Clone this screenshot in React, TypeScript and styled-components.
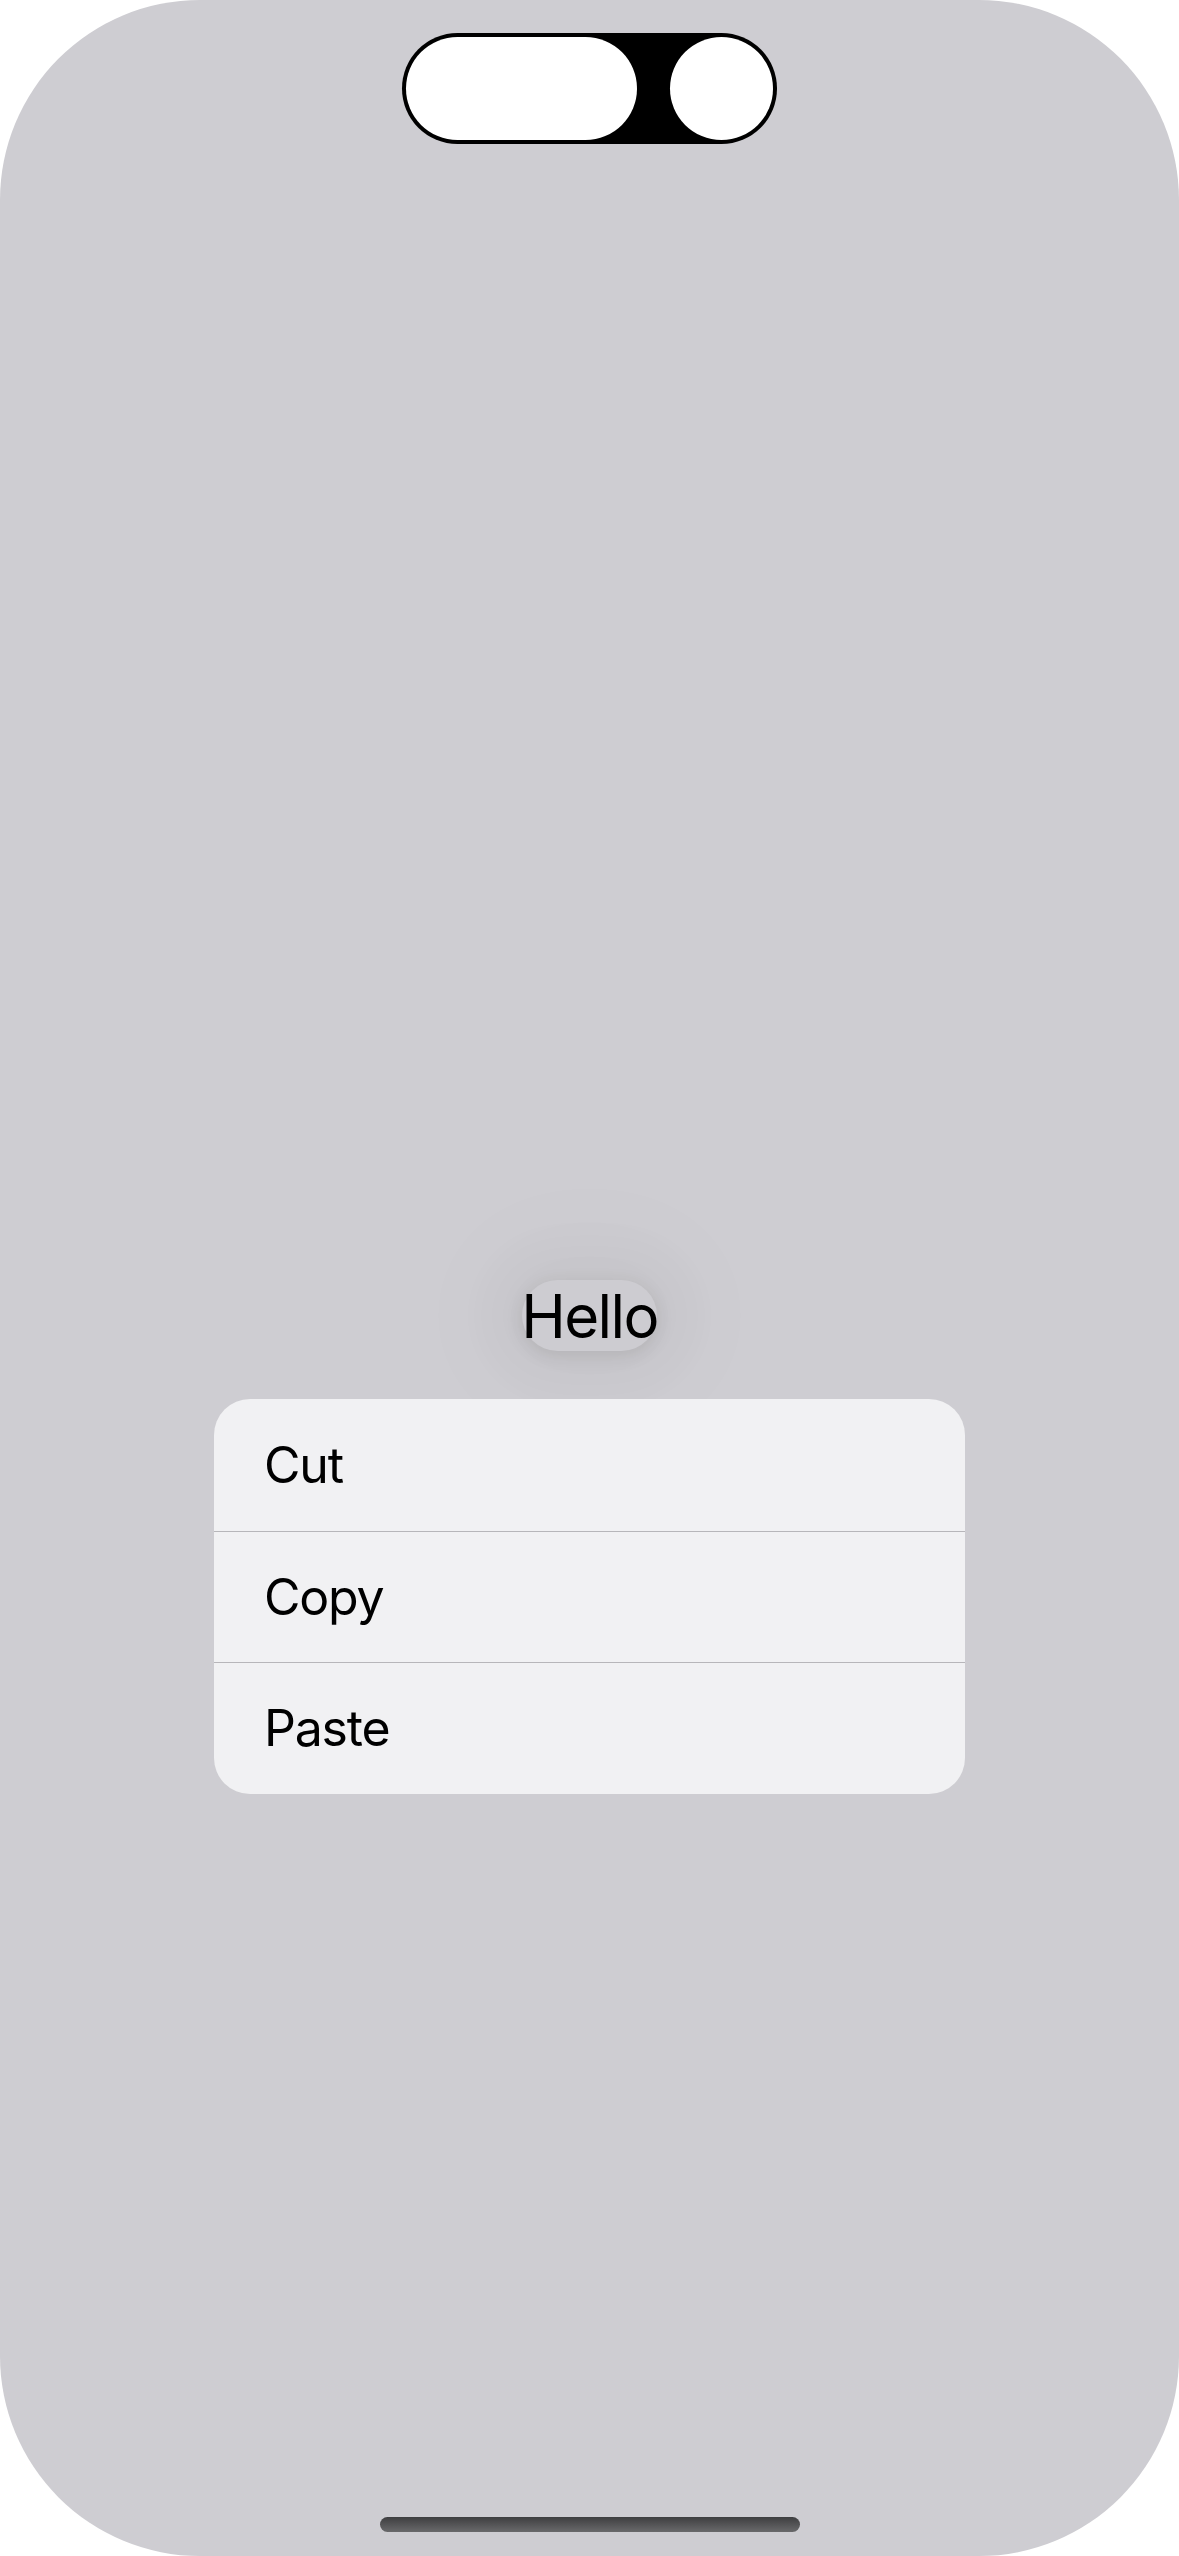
import React from "react";
import styled, { createGlobalStyle } from "styled-components";

const Global = createGlobalStyle`
  html, body { margin: 0; padding: 0; background: #ffffff; }
  body { font-family: "Inter", "Liberation Sans", sans-serif; }
`;

const Screen = styled.div`
  width: 1179px;
  height: 2556px;
  box-sizing: border-box;
  border-radius: 200px;
  background: #cecdd2;
  overflow: hidden;
  display: flex;
  flex-direction: column;
  align-items: center;
  padding: 33px 0 24px;
`;

const Island = styled.div`
  width: 375px;
  height: 111px;
  box-sizing: border-box;
  padding: 4px;
  border-radius: 56px;
  background: #000;
  display: flex;
  align-items: center;
  justify-content: space-between;
`;

const IslandPill = styled.div`
  width: 231px;
  height: 103px;
  border-radius: 52px;
  background: #fff;
`;

const IslandDot = styled.div`
  width: 103px;
  height: 103px;
  border-radius: 50%;
  background: #fff;
`;

const Preview = styled.div`
  margin-top: 1136px;
  height: 71px;
  width: 135px;
  border-radius: 36px;
  background: #cdccd1;
  display: flex;
  align-items: center;
  justify-content: center;
  font-size: 60px;
  color: #000;
  letter-spacing: -1.6px;
  white-space: nowrap;
  box-shadow: 0 4px 18px rgba(0, 0, 0, 0.1), 0 0 50px 34px rgba(0, 0, 0, 0.025),
    0 0 100px 60px rgba(0, 0, 0, 0.015);
`;

const Menu = styled.div`
  margin-top: 48px;
  width: 751px;
  border-radius: 36px;
  background: #f1f1f3;
  overflow: hidden;
  display: flex;
  flex-direction: column;
`;

const Item = styled.div<{ $divider?: boolean }>`
  height: 131.5px;
  box-sizing: border-box;
  padding-left: 50px;
  display: flex;
  align-items: center;
  font-size: 50px;
  color: #000;
  letter-spacing: -1.2px;
  border-top: ${(p) => (p.$divider ? "1.5px solid #b7b6ba" : "none")};
`;

const HomeIndicator = styled.div`
  margin-top: auto;
  width: 420px;
  height: 15px;
  border-radius: 8px;
  background: linear-gradient(#3e3e40, #69696b);
`;

export default function App() {
  const items = ["Cut", "Copy", "Paste"];
  return (
    <>
      <Global />
      <Screen>
        <Island>
          <IslandPill />
          <IslandDot />
        </Island>
        <Preview>Hello</Preview>
        <Menu>
          {items.map((t, i) => (
            <Item key={t} $divider={i > 0}>
              {t}
            </Item>
          ))}
        </Menu>
        <HomeIndicator />
      </Screen>
    </>
  );
}
